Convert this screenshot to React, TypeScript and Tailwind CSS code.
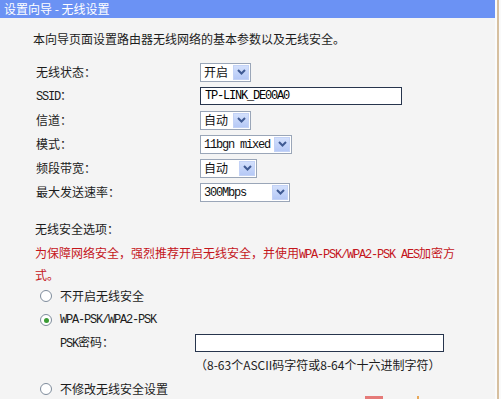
import React from "react";

const CJK = { fontFamily: '"Noto Sans CJK SC", "Noto Sans", sans-serif' };
const MONO = { fontFamily: '"Liberation Mono", "Noto Sans CJK SC", monospace' };

function M({ children }: { children: React.ReactNode }) {
  return (
    <span style={MONO} className="text-[12px] tracking-[-1.2px]">
      {children}
    </span>
  );
}

function Chevron() {
  return (
    <svg width="9" height="6" viewBox="0 0 9 6">
      <path d="M1 1 L4.5 4.5 L8 1" fill="none" stroke="#3f5a93" strokeWidth="2" />
    </svg>
  );
}

function Select({ w, children }: { w: string; children: React.ReactNode }) {
  return (
    <div className={`${w} h-[19px] border border-[#9aa6b8] bg-white flex items-center pl-[3px] pr-[1px]`}>
      <div className="text-[12px] leading-none text-[#111]">{children}</div>
      <div className="ml-auto w-[16px] h-[15px] bg-gradient-to-b from-[#d3e0fc] to-[#b6c9f6] border border-[#c3d2f6] flex items-center justify-center">
        <Chevron />
      </div>
    </div>
  );
}

function Radio({ checked }: { checked?: boolean }) {
  return (
    <span className="w-[12px] h-[12px] rounded-full border border-[#7f8c9c] bg-white flex items-center justify-center shrink-0">
      {checked && <span className="w-[5px] h-[5px] rounded-full bg-[#3a9c34]" />}
    </span>
  );
}

function Row({ label, children }: { label: React.ReactNode; children: React.ReactNode }) {
  return (
    <div className="h-[24px] flex items-center">
      <div className="w-[164px] text-[12px] text-[#1c1c1c]">{label}</div>
      {children}
    </div>
  );
}

export default function App() {
  return (
    <div style={CJK} className="relative w-[501px] h-[399px] bg-[#f4f4f4] overflow-hidden flex">
      <div className="flex-1 flex flex-col">
        <div className="h-[21px] bg-[#6b92f4] flex items-center pl-[4px] text-white text-[12px]">
          设置向导 - 无线设置
        </div>
        <div className="h-[1px] bg-[#eef2fc]" />
        <div className="pl-[33px] pt-[11px] flex flex-col">
          <div className="h-[20px] flex items-center text-[12px] text-[#1c1c1c]">
            本向导页面设置路由器无线网络的基本参数以及无线安全。
          </div>
          <div className="mt-[11px] pl-[3px] flex flex-col">
            <Row label="无线状态：">
              <Select w="w-[51px]">开启</Select>
            </Row>
            <Row label={<><M>SSID</M>：</>}>
              <div className="w-[202px] h-[18px] border border-[#27354d] bg-white flex items-center pl-[4px]">
                <M>TP-LINK_DE00A0</M>
              </div>
            </Row>
            <Row label="信道：">
              <Select w="w-[51px]">自动</Select>
            </Row>
            <Row label="模式：">
              <Select w="w-[92px]">
                <M>11bgn mixed</M>
              </Select>
            </Row>
            <Row label="频段带宽：">
              <Select w="w-[57px]">自动</Select>
            </Row>
            <Row label="最大发送速率：">
              <Select w="w-[90px]">
                <M>300Mbps</M>
              </Select>
            </Row>
          </div>
          <div className="pl-[2px] mt-[15px] h-[20px] flex items-center text-[12px] text-[#1c1c1c]">
            无线安全选项：
          </div>
          <div className="pl-[2px] mt-[4px] text-[12px] leading-[19px] text-[#c4161c]">
            <div className="whitespace-nowrap">
              为保障网络安全，强烈推荐开启无线安全，并使用<M>WPA-PSK/WPA2-PSK AES</M>加密方
            </div>
            <div>式。</div>
          </div>
          <div className="mt-[0px] pl-[7px] flex flex-col text-[12px] text-[#1c1c1c]">
            <div className="h-[24px] flex items-center gap-[8px]">
              <Radio />
              <span>不开启无线安全</span>
            </div>
            <div className="h-[24px] flex items-center gap-[8px]">
              <Radio checked />
              <M>WPA-PSK/WPA2-PSK</M>
            </div>
            <div className="mt-[1px] h-[20px] flex items-center pl-[20px]">
              <div className="w-[135px]">
                <M>PSK</M>密码：
              </div>
              <div className="w-[249px] h-[18px] border border-[#27354d] bg-white" />
            </div>
            <div className="mt-[2px] h-[20px] flex items-center pl-[155px] whitespace-nowrap">
              （8-63个ASCII码字符或8-64个十六进制字符）
            </div>
            <div className="mt-[2px] h-[24px] flex items-center gap-[8px]">
              <Radio />
              <span>不修改无线安全设置</span>
            </div>
          </div>
        </div>
      </div>
      <div className="w-[2px] bg-[#fbfbfb]" />
      <div className="w-[2px] bg-[#d6bf9f]" />
      <div className="w-[2px] bg-[#fafafa]" />
      <div className="absolute left-[365px] top-[396px] w-[18px] h-[3px] bg-[#e57a78]" />
      <div className="absolute left-[417px] top-[396px] w-[2px] h-[3px] bg-[#e8a85a]" />
    </div>
  );
}
